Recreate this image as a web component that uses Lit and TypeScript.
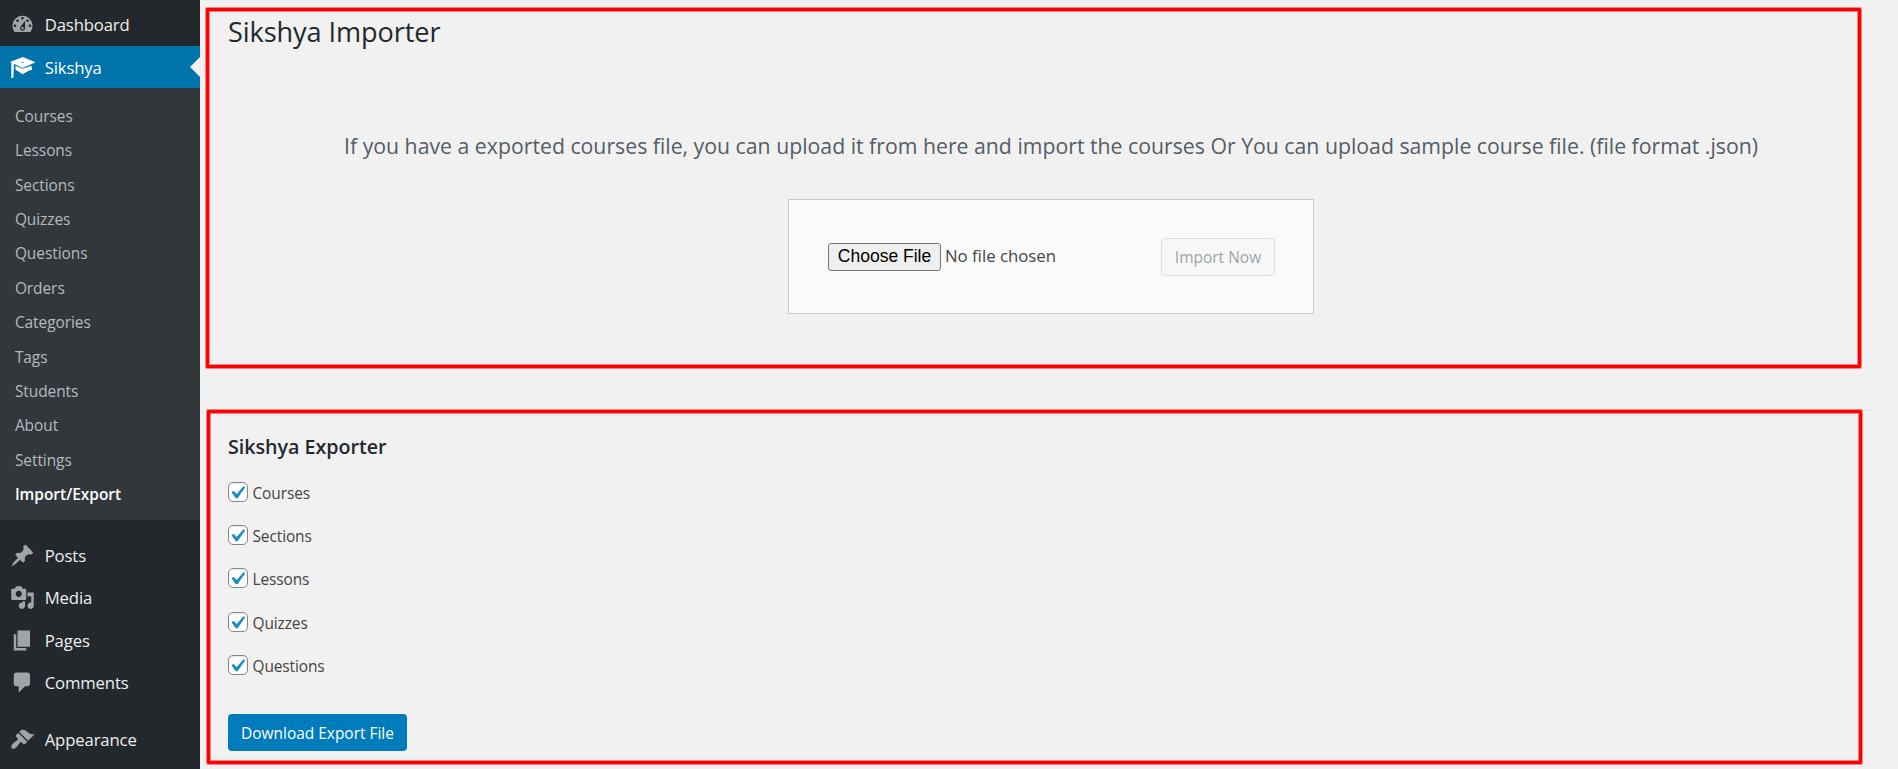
import { LitElement, html, css } from "lit";
import { customElement } from "lit/decorators.js";
import { classMap } from "lit/directives/class-map.js";

const ICONS: Record<string, string> = {
  dashboard:
    "M3.76 16h12.48c1.1-1.37 1.76-3.11 1.76-5 0-4.42-3.58-8-8-8s-8 3.58-8 8c0 1.89.66 3.63 1.76 5zM10 4c.55 0 1 .45 1 1s-.45 1-1 1-1-.45-1-1 .45-1 1-1zM6 6c.55 0 1 .45 1 1s-.45 1-1 1-1-.45-1-1 .45-1 1-1zm8 0c.55 0 1 .45 1 1s-.45 1-1 1-1-.45-1-1 .45-1 1-1zm-5.37 5.55L12 7v6c0 1.1-.9 2-2 2s-2-.9-2-2c0-.57.24-1.08.63-1.45zM4 10c.55 0 1 .45 1 1s-.45 1-1 1-1-.45-1-1 .45-1 1-1zm12 0c.55 0 1 .45 1 1s-.45 1-1 1-1-.45-1-1 .45-1 1-1zm-5 3c0-.55-.45-1-1-1s-1 .45-1 1 .45 1 1 1 1-.45 1-1z",
  post:
    "M10.44 3.02l1.82-1.82 6.36 6.35-1.83 1.82c-1.05-.68-2.48-.57-3.41.36l-.75.75c-.92.93-1.04 2.35-.35 3.41l-1.83 1.82-2.41-2.41-2.8 2.79c-.42.42-3.38 2.71-3.8 2.29s1.86-3.39 2.28-3.81l2.79-2.79L4.1 9.36l1.83-1.82c1.05.69 2.48.57 3.4-.36l.75-.75c.93-.92 1.05-2.35.36-3.41z",
  media:
    "M13 11V4c0-.55-.45-1-1-1h-1.67L9 1H5L3.67 3H2c-.55 0-1 .45-1 1v7c0 .55.45 1 1 1h10c.55 0 1-.45 1-1zM7 4.5c1.38 0 2.5 1.12 2.5 2.5S8.38 9.5 7 9.5 4.5 8.38 4.5 7 5.62 4.5 7 4.5zM14 6h5v10.5c0 1.38-1.12 2.5-2.5 2.5S14 17.88 14 16.5s1.12-2.5 2.5-2.5c.17 0 .34.02.5.05V9h-3V6zm-4 8.05V13h2v3.5c0 1.38-1.12 2.5-2.5 2.5S7 17.88 7 16.5 8.12 14 9.5 14c.17 0 .34.02.5.05z",
  page: "M6 15V2h10v13H6zm-1 1h8v2H3V5h2v11z",
  comments:
    "M5 2h9c1.1 0 2 .9 2 2v7c0 1.1-.9 2-2 2h-2l-5 5v-5H5c-1.1 0-2-.9-2-2V4c0-1.1.9-2 2-2z",
  appearance:
    "M14.48 11.06L7.41 3.99l1.5-1.5c.5-.56 2.3-.47 3.51.32 1.21.8 1.43 1.28 2.91 2.1 1.18.64 2.45 1.26 4.45.85zm-.71.71L6.7 4.7 4.93 6.47c-.39.39-.39 1.02 0 1.41l1.06 1.06c.39.39.39 1.03 0 1.42-.6.6-1.43 1.11-2.21 1.69-.35.26-.7.53-1.01.84C1.43 14.23.4 16.08 1.4 17.07c.99 1 2.84-.03 4.18-1.36.31-.31.58-.66.85-1.02.57-.78 1.08-1.61 1.69-2.21.39-.39 1.02-.39 1.41 0l1.06 1.06c.39.39 1.02.39 1.41 0z",
};

const SUBMENU = [
  "Courses", "Lessons", "Sections", "Quizzes", "Questions", "Orders",
  "Categories", "Tags", "Students", "About", "Settings", "Import/Export",
];

const EXPORTS = ["Courses", "Sections", "Lessons", "Quizzes", "Questions"];

@customElement("admin-menu")
class AdminMenu extends LitElement {
  static styles = css`
    :host {
      display: block;
      width: 200px;
      padding-top: 3.5px;
      box-sizing: border-box;
      background: #23282d;
      color: #eee;
      font-family: "Open Sans", sans-serif;
      font-size: 16.7px;
      letter-spacing: -0.13px;
    }
    .item {
      display: flex;
      align-items: center;
      height: 42.5px;
      padding-left: 10px;
      gap: 9.7px;
      color: #eee;
    }
    .icon {
      width: 25px;
      height: 25px;
      fill: #a0a5aa;
      flex: none;
    }
    .current {
      position: relative;
      height: 42px;
      background: #0073aa;
      color: #fff;
    }
    .current .icon {
      fill: #fff;
      width: 26px;
      height: 21px;
      margin-right: -1px;
    }
    .current::after {
      content: "";
      position: absolute;
      right: 0;
      top: 11px;
      border: 10px solid transparent;
      border-right-color: #f1f1f1;
      border-left-width: 0;
    }
    .sub {
      background: #32373c;
      height: 432px;
      box-sizing: border-box;
      padding: 10.8px 0 0 14.9px;
      margin-bottom: 14px;
      font-size: 15.45px;
      letter-spacing: -0.05px;
      color: #b4b9be;
    }
    .sub div {
      height: 34.42px;
      line-height: 34.42px;
    }
    .sub .active {
      color: #fff;
      font-weight: 600;
      letter-spacing: 0;
    }
    .sep {
      height: 14px;
    }
  `;

  private item(icon: string, label: string) {
    return html`<div class="item">
      <svg class="icon" viewBox="0 0 20 20"><path d=${ICONS[icon]} /></svg>
      <span>${label}</span>
    </div>`;
  }

  render() {
    return html`
      ${this.item("dashboard", "Dashboard")}
      <div class="item current">
        <svg class="icon" viewBox="0 0 78 63">
          <path fill-rule="evenodd" d="M0 15L38 0l39 16-39 17zM35 15.500a3 1.500 0 1 0 6 0a3 1.500 0 1 0-6 0z" />
          <path d="M4 16l8 4-2 43H4z" />
          <path d="M16 26l22 9 26-9 3 12-11 3-18 11-15-10-6-3z" />
        </svg>
        <span>Sikshya</span>
      </div>
      <div class="sub">
        ${SUBMENU.map(
          (s) => html`<div class=${classMap({ active: s === "Import/Export" })}>${s}</div>`
        )}
      </div>
      ${this.item("post", "Posts")} ${this.item("media", "Media")}
      ${this.item("page", "Pages")} ${this.item("comments", "Comments")}
      <div class="sep"></div>
      ${this.item("appearance", "Appearance")}
    `;
  }
}

@customElement("app-root")
class AppRoot extends LitElement {
  static styles = css`
    :host {
      display: flex;
      position: relative;
      height: 769px;
      overflow: hidden;
      background: #f1f1f1;
      color: #444;
      font-family: "Open Sans", sans-serif;
      font-size: 15.45px;
    }
    main {
      flex: 1;
      padding: 14px 24px 0 28px;
    }
    h1 {
      margin: 0 0 81px;
      font-size: 27.1px;
      line-height: 36px;
      font-weight: 400;
      letter-spacing: -0.08px;
      color: #23282d;
    }
    .intro {
      margin: 0 0 38px;
      font-size: 21.25px;
      line-height: 30px;
      text-align: center;
      white-space: nowrap;
      color: #555d66;
    }
    .upload {
      display: flex;
      align-items: center;
      box-sizing: border-box;
      width: 526px;
      height: 115px;
      margin: 0 auto 96px;
      padding: 1px 38px 0 39px;
      border: 1px solid #ccc;
      background: #fafafa;
    }
    .choose {
      box-sizing: border-box;
      width: 113px;
      height: 28px;
      padding: 0 0 2px;
      border: 1px solid #767676;
      border-radius: 3px;
      background: #efefef;
      color: #000;
      font: 17.5px/24px "Liberation Sans", sans-serif;
    }
    .none {
      flex: 1;
      margin-left: 4px;
      padding-bottom: 2px;
      font-size: 16.75px;
      line-height: 24px;
    }
    .import {
      box-sizing: border-box;
      width: 114px;
      height: 38px;
      padding: 0;
      border: 1px solid #ddd;
      border-radius: 4px;
      background: #f7f7f7;
      color: #a0a5aa;
      font: 15.5px "Open Sans", sans-serif;
    }
    .export {
      border-top: 1px solid #ddd;
      box-shadow: inset 0 1px #fafafa;
      padding-top: 23px;
    }
    h2 {
      margin: 0 0 22px;
      font-size: 19.7px;
      line-height: 26px;
      font-weight: 600;
      letter-spacing: -0.03px;
      color: #23282d;
    }
    .list {
      display: grid;
      gap: 23.2px;
      margin-bottom: 39.2px;
      letter-spacing: -0.1px;
    }
    .row {
      display: flex;
      height: 20px;
      gap: 4.5px;
    }
    .row span {
      line-height: 22px;
    }
    .box {
      box-sizing: border-box;
      width: 20px;
      height: 20px;
      border: 1px solid #7e8993;
      border-radius: 5px;
      background: #fff;
      box-shadow: inset 0 1px 2px rgba(0, 0, 0, 0.1);
    }
    .box svg {
      display: block;
      width: 18px;
      height: 18px;
      fill: #1e8cbe;
    }
    .download {
      width: 179px;
      height: 37px;
      padding: 1px 0 0;
      border: 0;
      border-radius: 4px;
      background: #007cba;
      color: #fff;
      font: 15.45px "Open Sans", sans-serif;
    }
    .mark {
      position: absolute;
      box-sizing: border-box;
      width: 1655px;
      border: 3px solid #f00;
      border-radius: 1px;
      box-shadow: 0 0 0 1px rgba(255, 0, 0, 0.45), inset 0 0 0 1px rgba(255, 0, 0, 0.45);
      pointer-events: none;
    }
    .mark-import {
      left: 206px;
      top: 8px;
      height: 360px;
    }
    .mark-export {
      left: 207px;
      top: 410px;
      height: 354px;
    }
  `;

  render() {
    return html`
      <admin-menu></admin-menu>
      <main>
        <h1>Sikshya Importer</h1>
        <p class="intro">If you have a exported courses file, you can upload it from here and import the courses Or You can upload sample course file. (file format .json)</p>
        <div class="upload">
          <button class="choose">Choose File</button>
          <span class="none">No file chosen</span>
          <button class="import" disabled>Import Now</button>
        </div>
        <section class="export">
          <h2>Sikshya Exporter</h2>
          <div class="list">
            ${EXPORTS.map(
              (e) => html`<label class="row">
                <i class="box"><svg viewBox="3.81 2.5 13.71 13.71"><path d="M14.83 4.89l1.34.94-5.81 8.38H9.02L5.78 9.67l1.34-1.25 2.57 2.4z" /></svg></i>
                <span>${e}</span>
              </label>`
            )}
          </div>
          <button class="download">Download Export File</button>
        </section>
      </main>
      <div class="mark mark-import"></div>
      <div class="mark mark-export"></div>
    `;
  }
}
